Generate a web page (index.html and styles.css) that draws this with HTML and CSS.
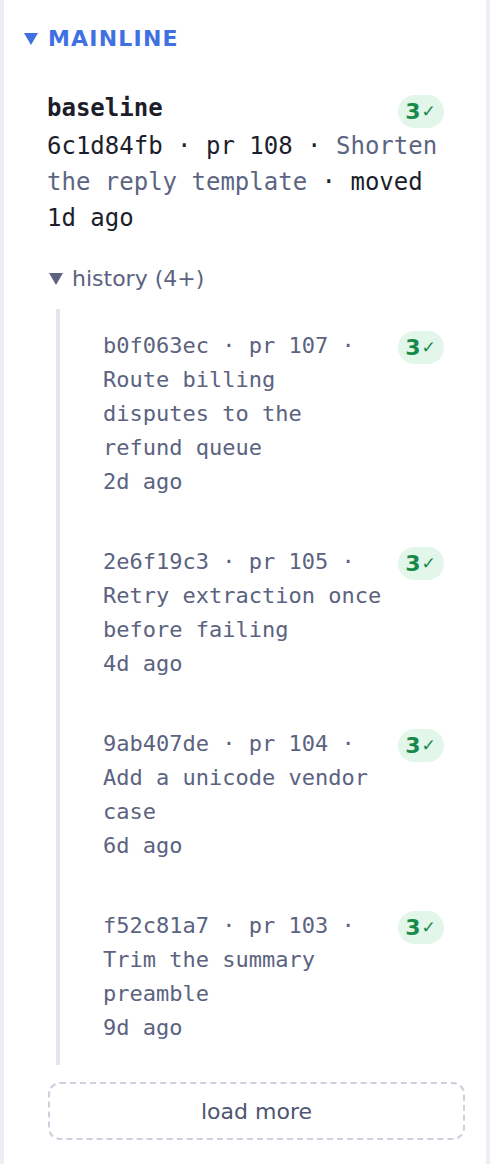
FILE: index.html
```html
<!DOCTYPE html>
<html lang="en">
<head>
<meta charset="utf-8">
<title>Mainline</title>
<link rel="stylesheet" href="styles.css">
</head>
<body>
<div class="panel">
  <div class="lane-head">
    <svg class="caret" width="14" height="12" viewBox="0 0 14 12"><polygon points="0,0 14,0 7,12" fill="currentColor"/></svg>
    <span class="lane-name">MAINLINE</span>
  </div>

  <div class="entry">
    <div class="entry-top">
      <span class="entry-title">baseline</span>
      <span class="badge badge-main">3<span class="tick">✓</span></span>
    </div>
    <p class="entry-meta">6c1d84fb · pr 108 · <span class="msg">Shorten the reply template</span> · moved 1d ago</p>

    <div class="history-toggle">
      <svg class="caret-sm" width="14" height="12" viewBox="0 0 14 12"><polygon points="0,0 14,0 7,12" fill="currentColor"/></svg>
      <span>history (4+)</span>
    </div>

    <div class="history">
      <div class="item">
        <div class="item-text">
          <p>b0f063ec · pr 107 · Route billing disputes to the refund queue</p>
          <p>2d ago</p>
        </div>
        <span class="badge">3<span class="tick">✓</span></span>
      </div>
      <div class="item">
        <div class="item-text">
          <p>2e6f19c3 · pr 105 · Retry extraction once before failing</p>
          <p>4d ago</p>
        </div>
        <span class="badge">3<span class="tick">✓</span></span>
      </div>
      <div class="item">
        <div class="item-text">
          <p>9ab407de · pr 104 · Add a unicode vendor case</p>
          <p>6d ago</p>
        </div>
        <span class="badge">3<span class="tick">✓</span></span>
      </div>
      <div class="item">
        <div class="item-text">
          <p>f52c81a7 · pr 103 · Trim the summary preamble</p>
          <p>9d ago</p>
        </div>
        <span class="badge">3<span class="tick">✓</span></span>
      </div>
    </div>
  </div>

  <div class="load-more">load more</div>
</div>
</body>
</html>
```

FILE: styles.css
```css
html, body {
  margin: 0;
  padding: 0;
}
body {
  background: #eceef4;
  font-family: "DejaVu Sans", sans-serif;
  min-height: 1164px;
}
.panel {
  margin-left: 4px;
  width: 482px;
  box-sizing: border-box;
  min-height: 1164px;
  background: #ffffff;
  padding: 22px 21px 24px 20px;
}
.lane-head {
  display: flex;
  align-items: center;
  height: 34px;
  color: #4170e3;
}
.caret {
  margin-right: 10px;
  flex: none;
}
.lane-name {
  font-family: "DejaVu Sans", sans-serif;
  font-weight: bold;
  font-size: 22px;
  letter-spacing: 1.2px;
  line-height: 34px;
}
.entry {
  margin-top: 34px;
  padding: 0 21px 0 23px;
}
.entry-top {
  display: flex;
  justify-content: space-between;
  align-items: flex-start;
}
.entry-title {
  font-family: "DejaVu Sans Mono", monospace;
  font-weight: bold;
  font-size: 24px;
  line-height: 36px;
  color: #1c1e2b;
}
.badge {
  flex: none;
  display: flex;
  align-items: center;
  justify-content: center;
  width: 46px;
  height: 33px;
  box-sizing: border-box;
  padding-right: 1px;
  border-radius: 17px;
  background: #e2f6ea;
  color: #17894b;
  font-family: "DejaVu Sans", sans-serif;
  font-weight: bold;
  font-size: 22px;
  line-height: 33px;
  margin-top: 2px;
}
.badge-main {
  margin-top: 5px;
}
.tick {
  font-weight: normal;
  font-size: 17px;
  margin-left: 1px;
}
.entry-meta {
  margin: 0;
  font-family: "DejaVu Sans Mono", monospace;
  font-size: 24px;
  line-height: 36px;
  color: #1c1e2b;
}
.msg {
  color: #5b6582;
}
.history-toggle {
  margin-top: 26px;
  display: flex;
  align-items: center;
  height: 34px;
  font-size: 22px;
  line-height: 34px;
  color: #5b6380;
  padding-left: 2px;
}
.caret-sm {
  margin-right: 9px;
  flex: none;
}
.history {
  margin-top: 13px;
  margin-left: 9px;
  border-left: 4px solid #e4e6ef;
  padding: 20px 0 20px 43px;
  display: flex;
  flex-direction: column;
  gap: 46px;
}
.item {
  display: flex;
  justify-content: space-between;
  align-items: flex-start;
  gap: 12px;
}
.item-text {
  flex: 1;
  font-family: "DejaVu Sans Mono", monospace;
  font-size: 22px;
  line-height: 34px;
  color: #5b6380;
}
.item-text p {
  margin: 0;
}
.load-more {
  margin: 17px 0 0 24px;
  height: 58px;
  box-sizing: border-box;
  border: 2px dashed #cdd0de;
  border-radius: 12px;
  display: flex;
  align-items: center;
  justify-content: center;
  font-size: 22px;
  color: #4e5672;
}
```
